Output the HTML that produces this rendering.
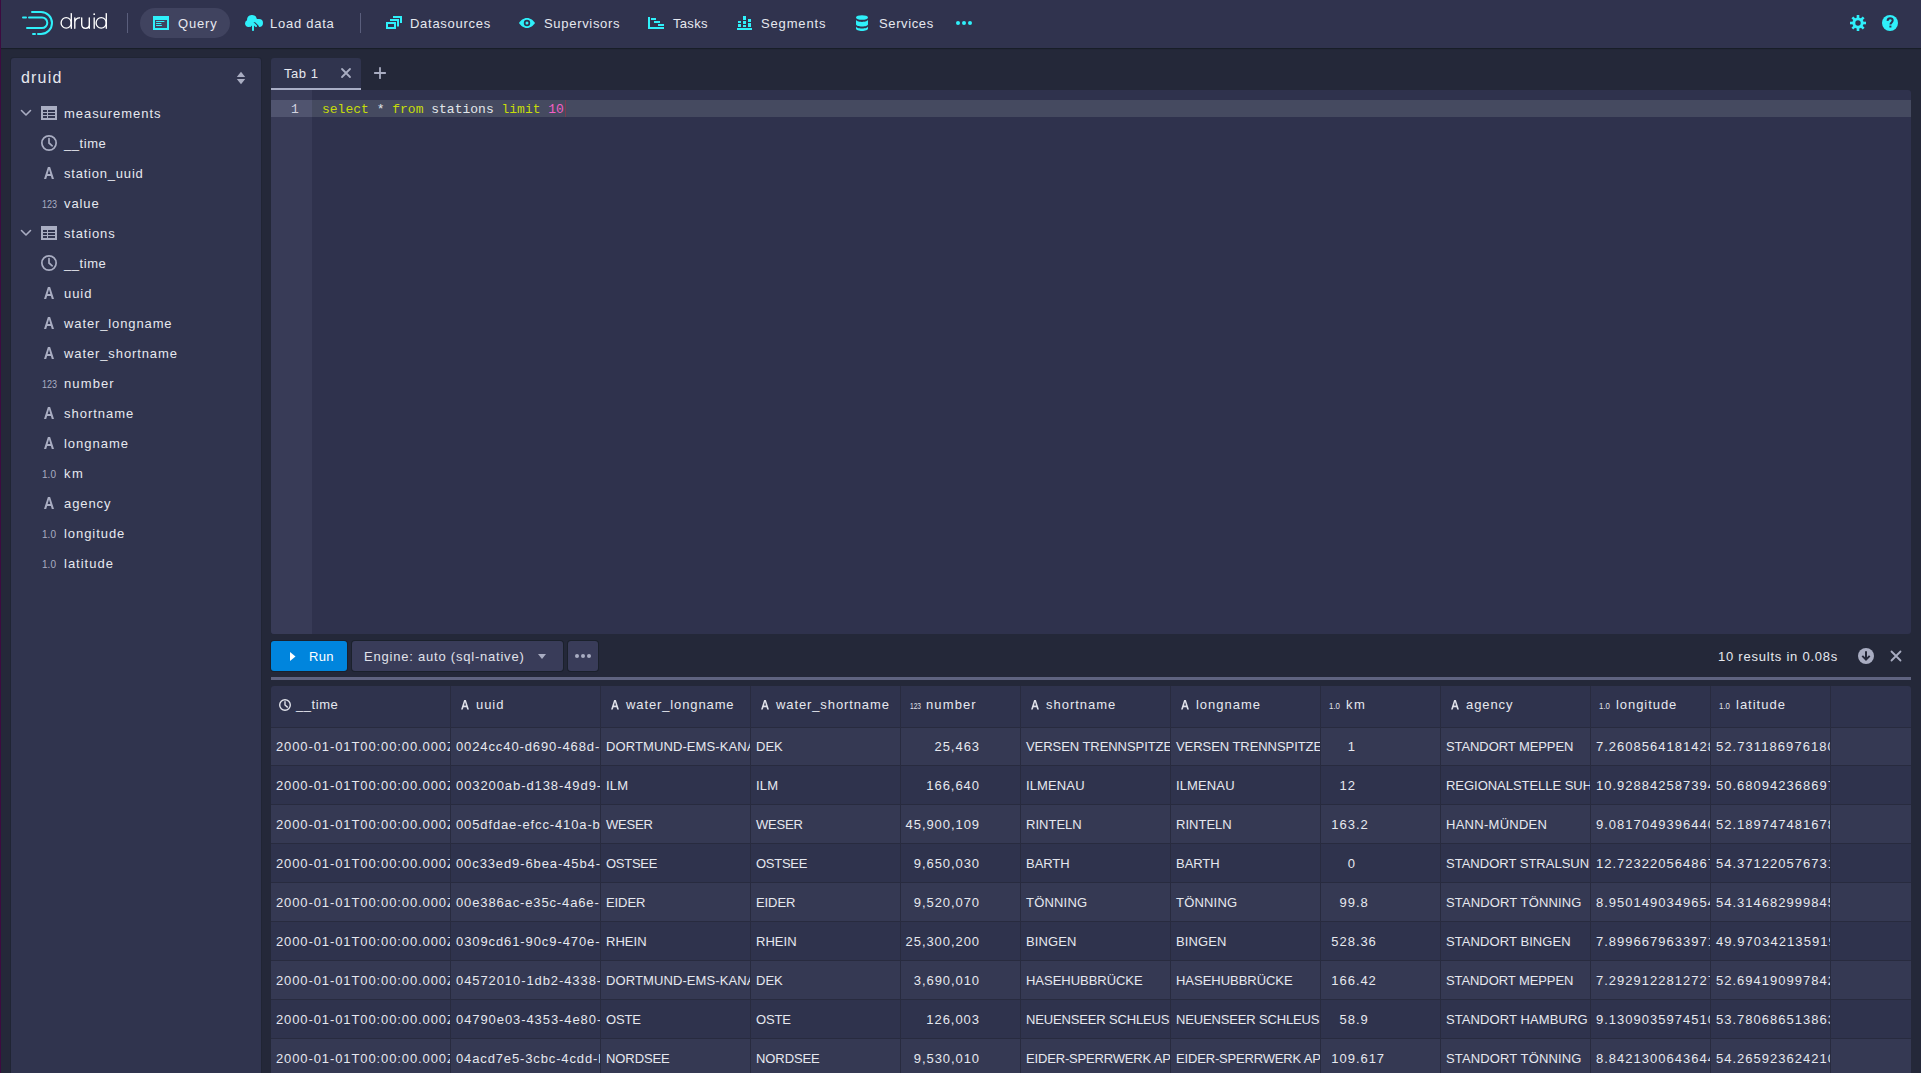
<!DOCTYPE html><html><head><meta charset="utf-8"><style>
html,body{margin:0;padding:0;}
body{width:1921px;height:1073px;overflow:hidden;position:relative;background:#242839;font-family:'Liberation Sans', sans-serif;}
.a{position:absolute;}
.t{position:absolute;white-space:pre;font-family:'Liberation Sans', sans-serif;}
svg{position:absolute;overflow:visible;}
</style></head><body><div class="a" style="left:0;top:0;width:1px;height:1073px;background:#3d0b40;z-index:5"></div><div class="a" style="left:0;top:0;width:1921px;height:48px;background:#30334e;box-shadow:0 0 0 1px rgba(16,22,26,.2),0 0 0 rgba(16,22,26,0),0 1px 1px rgba(16,22,26,.4)"></div><svg style="left:0;top:0" width="140" height="48" viewBox="0 0 140 48">
<g fill="none" stroke="#2ff0fa" stroke-width="2" stroke-linecap="round">
<path d="M32 12 H41 A11 11 0 0 1 41 34 H38"/>
<path d="M33 34 H35"/>
<path d="M23 17.5 H26"/>
<path d="M29 17.5 H42 A5.3 5.3 0 0 1 42 28.1 H27"/>
</g>
<g fill="none" stroke="#ffffff" stroke-width="1.35" stroke-linecap="round">
<ellipse cx="66.2" cy="22.9" rx="5.1" ry="5.3"/><path d="M71.3 13.6 V28.2"/>
<path d="M74.8 17.8 V28.2 M74.8 21.8 Q75.6 17.9 79.6 17.8"/>
<path d="M81.7 17.8 V24.3 Q81.7 28.3 85.5 28.3 Q89.3 28.3 89.3 24.3 M89.3 17.8 V28.2"/>
<path d="M94.2 18 V28.2"/>
<ellipse cx="101.2" cy="22.9" rx="5.1" ry="5.3"/><path d="M106.3 13.6 V28.2"/>
</g>
<circle cx="94.2" cy="14.2" r="0.9" fill="#ffffff"/>
</svg><div class="a" style="left:127px;top:13px;width:1px;height:20px;background:#5a5e7c"></div><div class="a" style="left:360px;top:13px;width:1px;height:20px;background:#5a5e7c"></div><div class="a" style="left:140px;top:8px;width:90px;height:30px;border-radius:15px;background:#40435f"></div><svg style="left:153px;top:15px" width="16" height="16" viewBox="0 0 16 16"><path fill="#2ff0fa" fill-rule="evenodd" d="M0 1h16v14H0z M2 5h12v8H2z"/><g stroke="#2ff0fa" stroke-width="1" stroke-linecap="round"><path d="M3.5 6.5h7.5M3.5 8.5h4.5M3.5 10.5h5"/></g></svg><svg style="left:245px;top:15px" width="16" height="16" viewBox="0 0 16 16"><path fill="#2ff0fa" d="M8.71 7.29C8.53 7.11 8.28 7 8 7s-.53.11-.71.29l-3 3a1.003 1.003 0 001.42 1.42L7 10.41V15c0 .55.45 1 1 1s1-.45 1-1v-4.59l1.29 1.29c.18.19.43.3.71.3a1.003 1.003 0 00.71-1.71l-3-3zM12 4c-.03 0-.07 0-.1.01A5 5 0 002 5c0 .11.01.22.02.33A3.51 3.51 0 000 8.5C0 10.43 1.57 12 3.5 12H4c0-.55.22-1.05.59-1.41l3-3a1.986 1.986 0 012.82 0l3 3c.37.36.59.86.59 1.41a4 4 0 000-8z"/></svg><svg style="left:386px;top:15px" width="16" height="16" viewBox="0 0 16 16"><g fill="none" stroke="#2ff0fa" stroke-width="2"><rect x="1" y="8" width="8" height="5"/><path d="M4 5H12V11.5"/><path d="M7 2H15V8"/></g></svg><svg style="left:519px;top:15px" width="16" height="16" viewBox="0 0 16 16"><path fill="#2ff0fa" fill-rule="evenodd" d="M8 3C4.5 3 1.6 5.6 0 8c1.6 2.4 4.5 5 8 5s6.4-2.6 8-5c-1.6-2.4-4.5-5-8-5zm0 1.8A3.2 3.2 0 1 1 8 11.2 3.2 3.2 0 0 1 8 4.8zm0 1.7A1.5 1.5 0 1 0 8 9.5 1.5 1.5 0 0 0 8 6.5z"/></svg><svg style="left:648px;top:15px" width="16" height="16" viewBox="0 0 16 16"><g fill="#2ff0fa"><rect x="0" y="2" width="2" height="12"/><rect x="0" y="12" width="16" height="2"/><rect x="3" y="3" width="5" height="2"/><rect x="6" y="6" width="6" height="2"/><rect x="10" y="9" width="6" height="2"/></g></svg><svg style="left:737px;top:15px" width="16" height="16" viewBox="0 0 16 16"><g fill="#2ff0fa"><rect x="0" y="13" width="15" height="2"/><rect x="1" y="6" width="3" height="2"/><rect x="1" y="9" width="3" height="3"/><rect x="6" y="1" width="3" height="4"/><rect x="6" y="6" width="3" height="3"/><rect x="6" y="10" width="3" height="2"/><rect x="11" y="4" width="3" height="3"/><rect x="11" y="8" width="3" height="4"/></g></svg><svg style="left:856px;top:15px" width="12" height="16" viewBox="0 0 12 16"><g fill="#2ff0fa"><ellipse cx="6" cy="2.5" rx="6" ry="2.3"/><path d="M0 4.6c0 1.3 2.7 2.4 6 2.4s6-1.1 6-2.4V9.2c0 1.3-2.7 2.3-6 2.3S0 10.5 0 9.2z"/><path d="M0 11.3c0 1.3 2.7 2.3 6 2.3s6-1 6-2.3v2.2c0 1.4-2.7 2.5-6 2.5S0 14.9 0 13.5z"/></g></svg><svg style="left:955px;top:21px" width="18" height="4" viewBox="0 0 18 4"><g fill="#2ff0fa"><circle cx="3" cy="2" r="2"/><circle cx="9" cy="2" r="2"/><circle cx="15" cy="2" r="2"/></g></svg><svg style="left:1850px;top:15px" width="16" height="16" viewBox="0 0 16 16"><g fill="#2ff0fa"><rect x="6.7" y="0" width="2.6" height="4" transform="rotate(0 8 8)"/><rect x="6.7" y="0" width="2.6" height="4" transform="rotate(45 8 8)"/><rect x="6.7" y="0" width="2.6" height="4" transform="rotate(90 8 8)"/><rect x="6.7" y="0" width="2.6" height="4" transform="rotate(135 8 8)"/><rect x="6.7" y="0" width="2.6" height="4" transform="rotate(180 8 8)"/><rect x="6.7" y="0" width="2.6" height="4" transform="rotate(225 8 8)"/><rect x="6.7" y="0" width="2.6" height="4" transform="rotate(270 8 8)"/><rect x="6.7" y="0" width="2.6" height="4" transform="rotate(315 8 8)"/><circle cx="8" cy="8" r="5.6"/></g><circle cx="8" cy="8" r="2.7" fill="#30334e"/></svg><svg style="left:1882px;top:15px" width="16" height="16" viewBox="0 0 16 16"><circle cx="8" cy="8" r="8" fill="#2ff0fa"/><path d="M5.5 5.8C5.7 4.1 6.8 3.3 8.1 3.3c1.5 0 2.6.9 2.6 2.3 0 1.8-2.1 2-2.3 3.9" fill="none" stroke="#30334e" stroke-width="2"/><rect x="7.4" y="10.6" width="2" height="1.9" fill="#30334e"/></svg><span class="t" style="left:178px;top:17.00px;font-size:13px;line-height:13px;color:#e6e8ef;letter-spacing:0.822px;font-weight:400;">Query</span><span class="t" style="left:270px;top:17.00px;font-size:13px;line-height:13px;color:#e6e8ef;letter-spacing:0.752px;font-weight:400;">Load data</span><span class="t" style="left:410px;top:17.00px;font-size:13px;line-height:13px;color:#e6e8ef;letter-spacing:0.727px;font-weight:400;">Datasources</span><span class="t" style="left:544px;top:17.00px;font-size:13px;line-height:13px;color:#e6e8ef;letter-spacing:0.692px;font-weight:400;">Supervisors</span><span class="t" style="left:673px;top:17.00px;font-size:13px;line-height:13px;color:#e6e8ef;letter-spacing:0.322px;font-weight:400;">Tasks</span><span class="t" style="left:761px;top:17.00px;font-size:13px;line-height:13px;color:#e6e8ef;letter-spacing:0.842px;font-weight:400;">Segments</span><span class="t" style="left:879px;top:17.00px;font-size:13px;line-height:13px;color:#e6e8ef;letter-spacing:0.621px;font-weight:400;">Services</span><div class="a" style="left:11px;top:58px;width:250px;height:1030px;background:#30344e;border-radius:3px;box-shadow:0 0 0 1px rgba(16,22,26,.15)"></div><span class="t" style="left:21px;top:70.46px;font-size:16px;line-height:16px;color:#e6e8ef;letter-spacing:1.181px;font-weight:400;">druid</span><svg style="left:236px;top:71px" width="10" height="14" viewBox="0 0 10 14"><g fill="#a9adc2"><path d="M0.8 6L5 0.8L9.2 6z"/><path d="M0.8 8L5 13.2L9.2 8z"/></g></svg><svg style="left:20px;top:105px" width="12" height="16" viewBox="0 0 12 16"><path d="M1.5 5.5L6 10L10.5 5.5" fill="none" stroke="#a9adc2" stroke-width="1.6" stroke-linecap="round" stroke-linejoin="round"/></svg><svg style="left:41px;top:106px" width="16" height="14" viewBox="0 0 16 14"><path fill="#a9adc2" fill-rule="evenodd" d="M0 0h16v14H0z M2 4h4v2H2z M7 4h7v2H7z M2 7h4v2H2z M7 7h7v2H7z M2 10h4v2H2z M7 10h7v2H7z"/></svg><span class="t" style="left:64px;top:107.00px;font-size:13px;line-height:13px;color:#e6e8ef;letter-spacing:0.957px;font-weight:400;">measurements</span><svg style="left:41px;top:135.0px" width="16" height="16" viewBox="0 0 16 16"><circle cx="8.0" cy="8.0" r="7.15" fill="none" stroke="#a9adc2" stroke-width="1.7"/><path d="M8.0 3.6V8.0L11.2 10.8" fill="none" stroke="#a9adc2" stroke-width="1.7" stroke-linecap="round"/></svg><span class="t" style="left:64px;top:137.00px;font-size:13px;line-height:13px;color:#e6e8ef;letter-spacing:0.557px;font-weight:400;">__time</span><svg style="left:44px;top:167.0px" width="10" height="12" viewBox="0 0 10 12"><path fill="#a9adc2" fill-rule="evenodd" d="M3.9 0h2.2L10 12H7.8L6.9 9H3.1L2.2 12H0z M5 2.6L3.7 7.1h2.6z"/></svg><span class="t" style="left:64px;top:167.00px;font-size:13px;line-height:13px;color:#e6e8ef;letter-spacing:0.789px;font-weight:400;">station_uuid</span><svg style="left:42px;top:199.5px" width="15" height="8" viewBox="0 0 15 8"><text x="0" y="8" font-family="Liberation Sans" font-size="10.5" fill="#a9adc2" textLength="15" lengthAdjust="spacingAndGlyphs">123</text></svg><span class="t" style="left:64px;top:197.00px;font-size:13px;line-height:13px;color:#e6e8ef;letter-spacing:0.887px;font-weight:400;">value</span><svg style="left:20px;top:225px" width="12" height="16" viewBox="0 0 12 16"><path d="M1.5 5.5L6 10L10.5 5.5" fill="none" stroke="#a9adc2" stroke-width="1.6" stroke-linecap="round" stroke-linejoin="round"/></svg><svg style="left:41px;top:226px" width="16" height="14" viewBox="0 0 16 14"><path fill="#a9adc2" fill-rule="evenodd" d="M0 0h16v14H0z M2 4h4v2H2z M7 4h7v2H7z M2 7h4v2H2z M7 7h7v2H7z M2 10h4v2H2z M7 10h7v2H7z"/></svg><span class="t" style="left:64px;top:227.00px;font-size:13px;line-height:13px;color:#e6e8ef;letter-spacing:0.838px;font-weight:400;">stations</span><svg style="left:41px;top:255.0px" width="16" height="16" viewBox="0 0 16 16"><circle cx="8.0" cy="8.0" r="7.15" fill="none" stroke="#a9adc2" stroke-width="1.7"/><path d="M8.0 3.6V8.0L11.2 10.8" fill="none" stroke="#a9adc2" stroke-width="1.7" stroke-linecap="round"/></svg><span class="t" style="left:64px;top:257.00px;font-size:13px;line-height:13px;color:#e6e8ef;letter-spacing:0.557px;font-weight:400;">__time</span><svg style="left:44px;top:287.0px" width="10" height="12" viewBox="0 0 10 12"><path fill="#a9adc2" fill-rule="evenodd" d="M3.9 0h2.2L10 12H7.8L6.9 9H3.1L2.2 12H0z M5 2.6L3.7 7.1h2.6z"/></svg><span class="t" style="left:64px;top:287.00px;font-size:13px;line-height:13px;color:#e6e8ef;letter-spacing:0.941px;font-weight:400;">uuid</span><svg style="left:44px;top:317.0px" width="10" height="12" viewBox="0 0 10 12"><path fill="#a9adc2" fill-rule="evenodd" d="M3.9 0h2.2L10 12H7.8L6.9 9H3.1L2.2 12H0z M5 2.6L3.7 7.1h2.6z"/></svg><span class="t" style="left:64px;top:317.00px;font-size:13px;line-height:13px;color:#e6e8ef;letter-spacing:0.882px;font-weight:400;">water_longname</span><svg style="left:44px;top:347.0px" width="10" height="12" viewBox="0 0 10 12"><path fill="#a9adc2" fill-rule="evenodd" d="M3.9 0h2.2L10 12H7.8L6.9 9H3.1L2.2 12H0z M5 2.6L3.7 7.1h2.6z"/></svg><span class="t" style="left:64px;top:347.00px;font-size:13px;line-height:13px;color:#e6e8ef;letter-spacing:0.892px;font-weight:400;">water_shortname</span><svg style="left:42px;top:379.5px" width="15" height="8" viewBox="0 0 15 8"><text x="0" y="8" font-family="Liberation Sans" font-size="10.5" fill="#a9adc2" textLength="15" lengthAdjust="spacingAndGlyphs">123</text></svg><span class="t" style="left:64px;top:377.00px;font-size:13px;line-height:13px;color:#e6e8ef;letter-spacing:1.112px;font-weight:400;">number</span><svg style="left:44px;top:407.0px" width="10" height="12" viewBox="0 0 10 12"><path fill="#a9adc2" fill-rule="evenodd" d="M3.9 0h2.2L10 12H7.8L6.9 9H3.1L2.2 12H0z M5 2.6L3.7 7.1h2.6z"/></svg><span class="t" style="left:64px;top:407.00px;font-size:13px;line-height:13px;color:#e6e8ef;letter-spacing:0.984px;font-weight:400;">shortname</span><svg style="left:44px;top:437.0px" width="10" height="12" viewBox="0 0 10 12"><path fill="#a9adc2" fill-rule="evenodd" d="M3.9 0h2.2L10 12H7.8L6.9 9H3.1L2.2 12H0z M5 2.6L3.7 7.1h2.6z"/></svg><span class="t" style="left:64px;top:437.00px;font-size:13px;line-height:13px;color:#e6e8ef;letter-spacing:0.979px;font-weight:400;">longname</span><svg style="left:42px;top:469.5px" width="14" height="8" viewBox="0 0 14 8"><text x="0" y="8" font-family="Liberation Sans" font-size="10.5" fill="#a9adc2" textLength="14" lengthAdjust="spacingAndGlyphs">1.0</text></svg><span class="t" style="left:64px;top:467.00px;font-size:13px;line-height:13px;color:#e6e8ef;letter-spacing:1.430px;font-weight:400;">km</span><svg style="left:44px;top:497.0px" width="10" height="12" viewBox="0 0 10 12"><path fill="#a9adc2" fill-rule="evenodd" d="M3.9 0h2.2L10 12H7.8L6.9 9H3.1L2.2 12H0z M5 2.6L3.7 7.1h2.6z"/></svg><span class="t" style="left:64px;top:497.00px;font-size:13px;line-height:13px;color:#e6e8ef;letter-spacing:0.896px;font-weight:400;">agency</span><svg style="left:42px;top:529.5px" width="14" height="8" viewBox="0 0 14 8"><text x="0" y="8" font-family="Liberation Sans" font-size="10.5" fill="#a9adc2" textLength="14" lengthAdjust="spacingAndGlyphs">1.0</text></svg><span class="t" style="left:64px;top:527.00px;font-size:13px;line-height:13px;color:#e6e8ef;letter-spacing:0.943px;font-weight:400;">longitude</span><svg style="left:42px;top:559.5px" width="14" height="8" viewBox="0 0 14 8"><text x="0" y="8" font-family="Liberation Sans" font-size="10.5" fill="#a9adc2" textLength="14" lengthAdjust="spacingAndGlyphs">1.0</text></svg><span class="t" style="left:64px;top:557.00px;font-size:13px;line-height:13px;color:#e6e8ef;letter-spacing:0.994px;font-weight:400;">latitude</span><div class="a" style="left:271px;top:58px;width:90px;height:30px;background:#30344e;border-radius:3px 3px 0 0"></div><div class="a" style="left:271px;top:88px;width:90px;height:2px;background:#a9aec6"></div><span class="t" style="left:284px;top:67.00px;font-size:13px;line-height:13px;color:#e6e8ef;letter-spacing:0.522px;font-weight:400;">Tab 1</span><svg style="left:340px;top:67px" width="12" height="12" viewBox="0 0 12 12"><path d="M2 2L10 10M10 2L2 10" stroke="#a9adc2" stroke-width="1.8" stroke-linecap="round"/></svg><svg style="left:374px;top:67px" width="12" height="12" viewBox="0 0 12 12"><path d="M6 0.8V11.2M0.8 6H11.2" stroke="#a9adc2" stroke-width="1.8" stroke-linecap="round"/></svg><div class="a" style="left:271px;top:90px;width:1640px;height:544px;background:#2f324d;border-radius:0 3px 3px 3px;overflow:hidden"><div class="a" style="left:0;top:0;width:41px;height:544px;background:#383b57"></div><div class="a" style="left:0;top:10px;width:41px;height:17px;background:#50546f"></div><div class="a" style="left:41px;top:10px;width:1599px;height:17px;background:#454a60"></div></div><div class="t" style="left:322px;top:103.00px;font-family:'Liberation Mono', monospace;font-size:13px;line-height:13px"><span style="color:#c6dd0a">select</span><span style="color:#e1e6ea"> </span><span style="color:#e1e6ea">*</span><span style="color:#e1e6ea"> </span><span style="color:#c6dd0a">from</span><span style="color:#e1e6ea"> stations </span><span style="color:#c6dd0a">limit</span><span style="color:#e1e6ea"> </span><span style="color:#f25fc4">10</span></div><div class="t" style="left:291px;top:103.00px;font-family:'Liberation Mono', monospace;font-size:13px;line-height:13px;color:#d0d2df">1</div><div class="a" style="left:565px;top:100px;width:1px;height:17px;background:#7a3b4e"></div><div class="a" style="left:271px;top:641px;width:76px;height:30px;background:#0085dd;border-radius:3px;box-shadow:0 0 0 1px rgba(16,22,26,.4)"></div><svg style="left:290px;top:652px" width="6" height="9" viewBox="0 0 6 9"><path d="M0 0L5.5 4.5L0 9z" fill="#ffffff"/></svg><span class="t" style="left:309px;top:650.00px;font-size:13px;line-height:13px;color:#ffffff;letter-spacing:0.359px;font-weight:400;">Run</span><div class="a" style="left:352px;top:641px;width:211px;height:30px;background:#393c59;border-radius:3px;box-shadow:0 0 0 1px rgba(16,22,26,.4)"></div><span class="t" style="left:364px;top:650.00px;font-size:13px;line-height:13px;color:#e0e2ea;letter-spacing:0.785px;font-weight:400;">Engine: auto (sql-native)</span><svg style="left:538px;top:654px" width="8" height="5" viewBox="0 0 8 5"><path d="M0 0H8L4 5z" fill="#a9adc2"/></svg><div class="a" style="left:568px;top:641px;width:30px;height:30px;background:#393c59;border-radius:3px;box-shadow:0 0 0 1px rgba(16,22,26,.4)"></div><svg style="left:575px;top:654px" width="16" height="4" viewBox="0 0 16 4"><g fill="#a9adc2"><circle cx="2" cy="2" r="2"/><circle cx="8" cy="2" r="2"/><circle cx="14" cy="2" r="2"/></g></svg><span class="t" style="left:1718px;top:650.00px;font-size:13px;line-height:13px;color:#e6e8ef;letter-spacing:0.766px;font-weight:400;">10 results in 0.08s</span><svg style="left:1858px;top:648px" width="16" height="16" viewBox="0 0 16 16"><circle cx="8" cy="8" r="8" fill="#a9adc2"/><path d="M8 3.2V11.5M4.3 7.9L8 11.6L11.7 7.9" fill="none" stroke="#242839" stroke-width="2"/></svg><svg style="left:1890px;top:650px" width="12" height="12" viewBox="0 0 12 12"><path d="M1.5 1.5L10.5 10.5M10.5 1.5L1.5 10.5" stroke="#a9adc2" stroke-width="1.8" stroke-linecap="round"/></svg><div class="a" style="left:271px;top:677px;width:1640px;height:3px;background:#5f6380"></div><div class="a" style="left:271px;top:686px;width:1640px;height:397px;background:#2f334d;border-radius:3px;overflow:hidden"><div class="a" style="left:0;top:41px;width:1640px;height:1px;background:#282b3f"></div><div class="a" style="left:0;top:42px;width:1640px;height:37px;background:#353953"></div><div class="a" style="left:0;top:79px;width:1640px;height:1px;background:#282b3f"></div><div class="a" style="left:0;top:80px;width:1640px;height:38px;background:#2f334d"></div><div class="a" style="left:0;top:118px;width:1640px;height:1px;background:#282b3f"></div><div class="a" style="left:0;top:119px;width:1640px;height:38px;background:#353953"></div><div class="a" style="left:0;top:157px;width:1640px;height:1px;background:#282b3f"></div><div class="a" style="left:0;top:158px;width:1640px;height:38px;background:#2f334d"></div><div class="a" style="left:0;top:196px;width:1640px;height:1px;background:#282b3f"></div><div class="a" style="left:0;top:197px;width:1640px;height:38px;background:#353953"></div><div class="a" style="left:0;top:235px;width:1640px;height:1px;background:#282b3f"></div><div class="a" style="left:0;top:236px;width:1640px;height:38px;background:#2f334d"></div><div class="a" style="left:0;top:274px;width:1640px;height:1px;background:#282b3f"></div><div class="a" style="left:0;top:275px;width:1640px;height:38px;background:#353953"></div><div class="a" style="left:0;top:313px;width:1640px;height:1px;background:#282b3f"></div><div class="a" style="left:0;top:314px;width:1640px;height:38px;background:#2f334d"></div><div class="a" style="left:0;top:352px;width:1640px;height:1px;background:#282b3f"></div><div class="a" style="left:0;top:353px;width:1640px;height:38px;background:#353953"></div><div class="a" style="left:0;top:391px;width:1640px;height:1px;background:#282b3f"></div><div class="a" style="left:179px;top:0;width:1px;height:400px;background:#282b3f"></div><div class="a" style="left:329px;top:0;width:1px;height:400px;background:#282b3f"></div><div class="a" style="left:479px;top:0;width:1px;height:400px;background:#282b3f"></div><div class="a" style="left:629px;top:0;width:1px;height:400px;background:#282b3f"></div><div class="a" style="left:749px;top:0;width:1px;height:400px;background:#282b3f"></div><div class="a" style="left:899px;top:0;width:1px;height:400px;background:#282b3f"></div><div class="a" style="left:1049px;top:0;width:1px;height:400px;background:#282b3f"></div><div class="a" style="left:1169px;top:0;width:1px;height:400px;background:#282b3f"></div><div class="a" style="left:1319px;top:0;width:1px;height:400px;background:#282b3f"></div><div class="a" style="left:1439px;top:0;width:1px;height:400px;background:#282b3f"></div><div class="a" style="left:1559px;top:0;width:1px;height:400px;background:#282b3f"></div></div><svg style="left:279px;top:699.0px" width="12" height="12" viewBox="0 0 12 12"><circle cx="6.0" cy="6.0" r="5.3" fill="none" stroke="#e0e2ea" stroke-width="1.4"/><path d="M6.0 2.7V6.0L8.399999999999999 8.100000000000001" fill="none" stroke="#e0e2ea" stroke-width="1.4" stroke-linecap="round"/></svg><span class="t" style="left:296px;top:698.00px;font-size:13px;line-height:13px;color:#e6e8ef;letter-spacing:0.557px;font-weight:400;">__time</span><svg style="left:461px;top:699.75px" width="8" height="9.5" viewBox="0 0 10 12"><path fill="#e0e2ea" fill-rule="evenodd" d="M3.9 0h2.2L10 12H7.8L6.9 9H3.1L2.2 12H0z M5 2.6L3.7 7.1h2.6z"/></svg><span class="t" style="left:476px;top:698.00px;font-size:13px;line-height:13px;color:#e6e8ef;letter-spacing:0.941px;font-weight:400;">uuid</span><svg style="left:611px;top:699.75px" width="8" height="9.5" viewBox="0 0 10 12"><path fill="#e0e2ea" fill-rule="evenodd" d="M3.9 0h2.2L10 12H7.8L6.9 9H3.1L2.2 12H0z M5 2.6L3.7 7.1h2.6z"/></svg><span class="t" style="left:626px;top:698.00px;font-size:13px;line-height:13px;color:#e6e8ef;letter-spacing:0.882px;font-weight:400;">water_longname</span><svg style="left:761px;top:699.75px" width="8" height="9.5" viewBox="0 0 10 12"><path fill="#e0e2ea" fill-rule="evenodd" d="M3.9 0h2.2L10 12H7.8L6.9 9H3.1L2.2 12H0z M5 2.6L3.7 7.1h2.6z"/></svg><span class="t" style="left:776px;top:698.00px;font-size:13px;line-height:13px;color:#e6e8ef;letter-spacing:0.892px;font-weight:400;">water_shortname</span><svg style="left:910px;top:701.75px" width="11" height="6.5" viewBox="0 0 11 6.5"><text x="0" y="6.5" font-family="Liberation Sans" font-size="8.5" fill="#e0e2ea" textLength="11" lengthAdjust="spacingAndGlyphs">123</text></svg><span class="t" style="left:926px;top:698.00px;font-size:13px;line-height:13px;color:#e6e8ef;letter-spacing:1.112px;font-weight:400;">number</span><svg style="left:1031px;top:699.75px" width="8" height="9.5" viewBox="0 0 10 12"><path fill="#e0e2ea" fill-rule="evenodd" d="M3.9 0h2.2L10 12H7.8L6.9 9H3.1L2.2 12H0z M5 2.6L3.7 7.1h2.6z"/></svg><span class="t" style="left:1046px;top:698.00px;font-size:13px;line-height:13px;color:#e6e8ef;letter-spacing:0.984px;font-weight:400;">shortname</span><svg style="left:1181px;top:699.75px" width="8" height="9.5" viewBox="0 0 10 12"><path fill="#e0e2ea" fill-rule="evenodd" d="M3.9 0h2.2L10 12H7.8L6.9 9H3.1L2.2 12H0z M5 2.6L3.7 7.1h2.6z"/></svg><span class="t" style="left:1196px;top:698.00px;font-size:13px;line-height:13px;color:#e6e8ef;letter-spacing:0.979px;font-weight:400;">longname</span><svg style="left:1329px;top:701.75px" width="11" height="6.5" viewBox="0 0 11 6.5"><text x="0" y="6.5" font-family="Liberation Sans" font-size="8.5" fill="#e0e2ea" textLength="11" lengthAdjust="spacingAndGlyphs">1.0</text></svg><span class="t" style="left:1346px;top:698.00px;font-size:13px;line-height:13px;color:#e6e8ef;letter-spacing:1.430px;font-weight:400;">km</span><svg style="left:1451px;top:699.75px" width="8" height="9.5" viewBox="0 0 10 12"><path fill="#e0e2ea" fill-rule="evenodd" d="M3.9 0h2.2L10 12H7.8L6.9 9H3.1L2.2 12H0z M5 2.6L3.7 7.1h2.6z"/></svg><span class="t" style="left:1466px;top:698.00px;font-size:13px;line-height:13px;color:#e6e8ef;letter-spacing:0.896px;font-weight:400;">agency</span><svg style="left:1599px;top:701.75px" width="11" height="6.5" viewBox="0 0 11 6.5"><text x="0" y="6.5" font-family="Liberation Sans" font-size="8.5" fill="#e0e2ea" textLength="11" lengthAdjust="spacingAndGlyphs">1.0</text></svg><span class="t" style="left:1616px;top:698.00px;font-size:13px;line-height:13px;color:#e6e8ef;letter-spacing:0.943px;font-weight:400;">longitude</span><svg style="left:1719px;top:701.75px" width="11" height="6.5" viewBox="0 0 11 6.5"><text x="0" y="6.5" font-family="Liberation Sans" font-size="8.5" fill="#e0e2ea" textLength="11" lengthAdjust="spacingAndGlyphs">1.0</text></svg><span class="t" style="left:1736px;top:698.00px;font-size:13px;line-height:13px;color:#e6e8ef;letter-spacing:0.994px;font-weight:400;">latitude</span><div class="a" style="left:271px;top:728px;width:179px;height:38px;overflow:hidden"><span class="t" style="left:5px;top:12.00px;font-size:13px;line-height:13px;color:#e6e8ef;letter-spacing:0.893px;font-weight:400;">2000-01-01T00:00:00.000Z</span></div><div class="a" style="left:450px;top:728px;width:150px;height:38px;overflow:hidden"><span class="t" style="left:6px;top:12.00px;font-size:13px;line-height:13px;color:#e6e8ef;letter-spacing:0.891px;font-weight:400;">0024cc40-d690-468d-9a3f-1b2c3d4e5f60</span></div><div class="a" style="left:600px;top:728px;width:150px;height:38px;overflow:hidden"><span class="t" style="left:6px;top:12.00px;font-size:13px;line-height:13px;color:#e6e8ef;letter-spacing:0.100px;font-weight:400;">DORTMUND-EMS-KANAL</span></div><div class="a" style="left:750px;top:728px;width:150px;height:38px;overflow:hidden"><span class="t" style="left:6px;top:12.00px;font-size:13px;line-height:13px;color:#e6e8ef;letter-spacing:0.005px;font-weight:400;">DEK</span></div><div class="a" style="left:900px;top:728px;width:120px;height:38px;overflow:hidden"><span class="t" style="left:34.5px;top:12.00px;font-size:13px;line-height:13px;color:#e6e8ef;letter-spacing:0.956px;font-weight:400;">25,463</span></div><div class="a" style="left:1020px;top:728px;width:150px;height:38px;overflow:hidden"><span class="t" style="left:6px;top:12.00px;font-size:13px;line-height:13px;color:#e6e8ef;letter-spacing:-0.057px;font-weight:400;">VERSEN TRENNSPITZE</span></div><div class="a" style="left:1170px;top:728px;width:150px;height:38px;overflow:hidden"><span class="t" style="left:6px;top:12.00px;font-size:13px;line-height:13px;color:#e6e8ef;letter-spacing:-0.057px;font-weight:400;">VERSEN TRENNSPITZE</span></div><div class="a" style="left:1320px;top:728px;width:120px;height:38px;overflow:hidden"><span class="t" style="left:27.71875px;top:12.00px;font-size:13px;line-height:13px;color:#e6e8ef;letter-spacing:1.047px;font-weight:400;">1</span></div><div class="a" style="left:1440px;top:728px;width:150px;height:38px;overflow:hidden"><span class="t" style="left:6px;top:12.00px;font-size:13px;line-height:13px;color:#e6e8ef;letter-spacing:-0.087px;font-weight:400;">STANDORT MEPPEN</span></div><div class="a" style="left:1590px;top:728px;width:120px;height:38px;overflow:hidden"><span class="t" style="left:6px;top:12.00px;font-size:13px;line-height:13px;color:#e6e8ef;letter-spacing:1.010px;font-weight:400;">7.260856418142867</span></div><div class="a" style="left:1710px;top:728px;width:120px;height:38px;overflow:hidden"><span class="t" style="left:6px;top:12.00px;font-size:13px;line-height:13px;color:#e6e8ef;letter-spacing:1.067px;font-weight:400;">52.73118697618097</span></div><div class="a" style="left:271px;top:766px;width:179px;height:38px;overflow:hidden"><span class="t" style="left:5px;top:13.00px;font-size:13px;line-height:13px;color:#e6e8ef;letter-spacing:0.893px;font-weight:400;">2000-01-01T00:00:00.000Z</span></div><div class="a" style="left:450px;top:766px;width:150px;height:38px;overflow:hidden"><span class="t" style="left:6px;top:13.00px;font-size:13px;line-height:13px;color:#e6e8ef;letter-spacing:0.914px;font-weight:400;">003200ab-d138-49d9-8c1d-2e3f4a5b6c70</span></div><div class="a" style="left:600px;top:766px;width:150px;height:38px;overflow:hidden"><span class="t" style="left:6px;top:13.00px;font-size:13px;line-height:13px;color:#e6e8ef;letter-spacing:0.208px;font-weight:400;">ILM</span></div><div class="a" style="left:750px;top:766px;width:150px;height:38px;overflow:hidden"><span class="t" style="left:6px;top:13.00px;font-size:13px;line-height:13px;color:#e6e8ef;letter-spacing:0.208px;font-weight:400;">ILM</span></div><div class="a" style="left:900px;top:766px;width:120px;height:38px;overflow:hidden"><span class="t" style="left:26.234375px;top:13.00px;font-size:13px;line-height:13px;color:#e6e8ef;letter-spacing:0.967px;font-weight:400;">166,640</span></div><div class="a" style="left:1020px;top:766px;width:150px;height:38px;overflow:hidden"><span class="t" style="left:6px;top:13.00px;font-size:13px;line-height:13px;color:#e6e8ef;letter-spacing:0.121px;font-weight:400;">ILMENAU</span></div><div class="a" style="left:1170px;top:766px;width:150px;height:38px;overflow:hidden"><span class="t" style="left:6px;top:13.00px;font-size:13px;line-height:13px;color:#e6e8ef;letter-spacing:0.121px;font-weight:400;">ILMENAU</span></div><div class="a" style="left:1320px;top:766px;width:120px;height:38px;overflow:hidden"><span class="t" style="left:19.453125px;top:13.00px;font-size:13px;line-height:13px;color:#e6e8ef;letter-spacing:1.039px;font-weight:400;">12</span></div><div class="a" style="left:1440px;top:766px;width:150px;height:38px;overflow:hidden"><span class="t" style="left:6px;top:13.00px;font-size:13px;line-height:13px;color:#e6e8ef;letter-spacing:-0.032px;font-weight:400;">REGIONALSTELLE SUHL</span></div><div class="a" style="left:1590px;top:766px;width:120px;height:38px;overflow:hidden"><span class="t" style="left:6px;top:13.00px;font-size:13px;line-height:13px;color:#e6e8ef;letter-spacing:1.006px;font-weight:400;">10.928842587394</span></div><div class="a" style="left:1710px;top:766px;width:120px;height:38px;overflow:hidden"><span class="t" style="left:6px;top:13.00px;font-size:13px;line-height:13px;color:#e6e8ef;letter-spacing:1.006px;font-weight:400;">50.680942368697</span></div><div class="a" style="left:271px;top:805px;width:179px;height:38px;overflow:hidden"><span class="t" style="left:5px;top:13.00px;font-size:13px;line-height:13px;color:#e6e8ef;letter-spacing:0.893px;font-weight:400;">2000-01-01T00:00:00.000Z</span></div><div class="a" style="left:450px;top:805px;width:150px;height:38px;overflow:hidden"><span class="t" style="left:6px;top:13.00px;font-size:13px;line-height:13px;color:#e6e8ef;letter-spacing:0.875px;font-weight:400;">005dfdae-efcc-410a-b7e2-3f4a5b6c7d80</span></div><div class="a" style="left:600px;top:805px;width:150px;height:38px;overflow:hidden"><span class="t" style="left:6px;top:13.00px;font-size:13px;line-height:13px;color:#e6e8ef;letter-spacing:-0.219px;font-weight:400;">WESER</span></div><div class="a" style="left:750px;top:805px;width:150px;height:38px;overflow:hidden"><span class="t" style="left:6px;top:13.00px;font-size:13px;line-height:13px;color:#e6e8ef;letter-spacing:-0.219px;font-weight:400;">WESER</span></div><div class="a" style="left:900px;top:805px;width:120px;height:38px;overflow:hidden"><span class="t" style="left:5.5625px;top:13.00px;font-size:13px;line-height:13px;color:#e6e8ef;letter-spacing:0.936px;font-weight:400;">45,900,109</span></div><div class="a" style="left:1020px;top:805px;width:150px;height:38px;overflow:hidden"><span class="t" style="left:6px;top:13.00px;font-size:13px;line-height:13px;color:#e6e8ef;letter-spacing:0.013px;font-weight:400;">RINTELN</span></div><div class="a" style="left:1170px;top:805px;width:150px;height:38px;overflow:hidden"><span class="t" style="left:6px;top:13.00px;font-size:13px;line-height:13px;color:#e6e8ef;letter-spacing:0.013px;font-weight:400;">RINTELN</span></div><div class="a" style="left:1320px;top:805px;width:120px;height:38px;overflow:hidden"><span class="t" style="left:11.171875px;top:13.00px;font-size:13px;line-height:13px;color:#e6e8ef;letter-spacing:1.042px;font-weight:400;">163</span><span class="t" style="left:36px;top:13.00px;font-size:13px;line-height:13px;color:#e6e8ef;letter-spacing:0.781px;font-weight:400;">.2</span></div><div class="a" style="left:1440px;top:805px;width:150px;height:38px;overflow:hidden"><span class="t" style="left:6px;top:13.00px;font-size:13px;line-height:13px;color:#e6e8ef;letter-spacing:0.273px;font-weight:400;">HANN-MÜNDEN</span></div><div class="a" style="left:1590px;top:805px;width:120px;height:38px;overflow:hidden"><span class="t" style="left:6px;top:13.00px;font-size:13px;line-height:13px;color:#e6e8ef;letter-spacing:1.010px;font-weight:400;">9.081704939644067</span></div><div class="a" style="left:1710px;top:805px;width:120px;height:38px;overflow:hidden"><span class="t" style="left:6px;top:13.00px;font-size:13px;line-height:13px;color:#e6e8ef;letter-spacing:1.010px;font-weight:400;">52.18974748167889</span></div><div class="a" style="left:271px;top:844px;width:179px;height:38px;overflow:hidden"><span class="t" style="left:5px;top:13.00px;font-size:13px;line-height:13px;color:#e6e8ef;letter-spacing:0.893px;font-weight:400;">2000-01-01T00:00:00.000Z</span></div><div class="a" style="left:450px;top:844px;width:150px;height:38px;overflow:hidden"><span class="t" style="left:6px;top:13.00px;font-size:13px;line-height:13px;color:#e6e8ef;letter-spacing:0.891px;font-weight:400;">00c33ed9-6bea-45b4-a6f3-4a5b6c7d8e90</span></div><div class="a" style="left:600px;top:844px;width:150px;height:38px;overflow:hidden"><span class="t" style="left:6px;top:13.00px;font-size:13px;line-height:13px;color:#e6e8ef;letter-spacing:-0.273px;font-weight:400;">OSTSEE</span></div><div class="a" style="left:750px;top:844px;width:150px;height:38px;overflow:hidden"><span class="t" style="left:6px;top:13.00px;font-size:13px;line-height:13px;color:#e6e8ef;letter-spacing:-0.273px;font-weight:400;">OSTSEE</span></div><div class="a" style="left:900px;top:844px;width:120px;height:38px;overflow:hidden"><span class="t" style="left:13.828125px;top:13.00px;font-size:13px;line-height:13px;color:#e6e8ef;letter-spacing:0.925px;font-weight:400;">9,650,030</span></div><div class="a" style="left:1020px;top:844px;width:150px;height:38px;overflow:hidden"><span class="t" style="left:6px;top:13.00px;font-size:13px;line-height:13px;color:#e6e8ef;letter-spacing:-0.041px;font-weight:400;">BARTH</span></div><div class="a" style="left:1170px;top:844px;width:150px;height:38px;overflow:hidden"><span class="t" style="left:6px;top:13.00px;font-size:13px;line-height:13px;color:#e6e8ef;letter-spacing:-0.041px;font-weight:400;">BARTH</span></div><div class="a" style="left:1320px;top:844px;width:120px;height:38px;overflow:hidden"><span class="t" style="left:27.71875px;top:13.00px;font-size:13px;line-height:13px;color:#e6e8ef;letter-spacing:1.047px;font-weight:400;">0</span></div><div class="a" style="left:1440px;top:844px;width:150px;height:38px;overflow:hidden"><span class="t" style="left:6px;top:13.00px;font-size:13px;line-height:13px;color:#e6e8ef;letter-spacing:0.007px;font-weight:400;">STANDORT STRALSUND</span></div><div class="a" style="left:1590px;top:844px;width:120px;height:38px;overflow:hidden"><span class="t" style="left:6px;top:13.00px;font-size:13px;line-height:13px;color:#e6e8ef;letter-spacing:1.006px;font-weight:400;">12.723220564867</span></div><div class="a" style="left:1710px;top:844px;width:120px;height:38px;overflow:hidden"><span class="t" style="left:6px;top:13.00px;font-size:13px;line-height:13px;color:#e6e8ef;letter-spacing:1.006px;font-weight:400;">54.371220576731</span></div><div class="a" style="left:271px;top:883px;width:179px;height:38px;overflow:hidden"><span class="t" style="left:5px;top:13.00px;font-size:13px;line-height:13px;color:#e6e8ef;letter-spacing:0.893px;font-weight:400;">2000-01-01T00:00:00.000Z</span></div><div class="a" style="left:450px;top:883px;width:150px;height:38px;overflow:hidden"><span class="t" style="left:6px;top:13.00px;font-size:13px;line-height:13px;color:#e6e8ef;letter-spacing:0.865px;font-weight:400;">00e386ac-e35c-4a6e-95a4-5b6c7d8e9fa0</span></div><div class="a" style="left:600px;top:883px;width:150px;height:38px;overflow:hidden"><span class="t" style="left:6px;top:13.00px;font-size:13px;line-height:13px;color:#e6e8ef;letter-spacing:-0.084px;font-weight:400;">EIDER</span></div><div class="a" style="left:750px;top:883px;width:150px;height:38px;overflow:hidden"><span class="t" style="left:6px;top:13.00px;font-size:13px;line-height:13px;color:#e6e8ef;letter-spacing:-0.084px;font-weight:400;">EIDER</span></div><div class="a" style="left:900px;top:883px;width:120px;height:38px;overflow:hidden"><span class="t" style="left:13.828125px;top:13.00px;font-size:13px;line-height:13px;color:#e6e8ef;letter-spacing:0.925px;font-weight:400;">9,520,070</span></div><div class="a" style="left:1020px;top:883px;width:150px;height:38px;overflow:hidden"><span class="t" style="left:6px;top:13.00px;font-size:13px;line-height:13px;color:#e6e8ef;letter-spacing:0.188px;font-weight:400;">TÖNNING</span></div><div class="a" style="left:1170px;top:883px;width:150px;height:38px;overflow:hidden"><span class="t" style="left:6px;top:13.00px;font-size:13px;line-height:13px;color:#e6e8ef;letter-spacing:0.188px;font-weight:400;">TÖNNING</span></div><div class="a" style="left:1320px;top:883px;width:120px;height:38px;overflow:hidden"><span class="t" style="left:19.453125px;top:13.00px;font-size:13px;line-height:13px;color:#e6e8ef;letter-spacing:1.039px;font-weight:400;">99</span><span class="t" style="left:36px;top:13.00px;font-size:13px;line-height:13px;color:#e6e8ef;letter-spacing:0.781px;font-weight:400;">.8</span></div><div class="a" style="left:1440px;top:883px;width:150px;height:38px;overflow:hidden"><span class="t" style="left:6px;top:13.00px;font-size:13px;line-height:13px;color:#e6e8ef;letter-spacing:0.130px;font-weight:400;">STANDORT TÖNNING</span></div><div class="a" style="left:1590px;top:883px;width:120px;height:38px;overflow:hidden"><span class="t" style="left:6px;top:13.00px;font-size:13px;line-height:13px;color:#e6e8ef;letter-spacing:1.010px;font-weight:400;">8.950149034965467</span></div><div class="a" style="left:1710px;top:883px;width:120px;height:38px;overflow:hidden"><span class="t" style="left:6px;top:13.00px;font-size:13px;line-height:13px;color:#e6e8ef;letter-spacing:1.010px;font-weight:400;">54.31468299984522</span></div><div class="a" style="left:271px;top:922px;width:179px;height:38px;overflow:hidden"><span class="t" style="left:5px;top:13.00px;font-size:13px;line-height:13px;color:#e6e8ef;letter-spacing:0.893px;font-weight:400;">2000-01-01T00:00:00.000Z</span></div><div class="a" style="left:450px;top:922px;width:150px;height:38px;overflow:hidden"><span class="t" style="left:6px;top:13.00px;font-size:13px;line-height:13px;color:#e6e8ef;letter-spacing:0.905px;font-weight:400;">0309cd61-90c9-470e-84b5-6c7d8e9fa0b1</span></div><div class="a" style="left:600px;top:922px;width:150px;height:38px;overflow:hidden"><span class="t" style="left:6px;top:13.00px;font-size:13px;line-height:13px;color:#e6e8ef;letter-spacing:0.028px;font-weight:400;">RHEIN</span></div><div class="a" style="left:750px;top:922px;width:150px;height:38px;overflow:hidden"><span class="t" style="left:6px;top:13.00px;font-size:13px;line-height:13px;color:#e6e8ef;letter-spacing:0.028px;font-weight:400;">RHEIN</span></div><div class="a" style="left:900px;top:922px;width:120px;height:38px;overflow:hidden"><span class="t" style="left:5.5625px;top:13.00px;font-size:13px;line-height:13px;color:#e6e8ef;letter-spacing:0.936px;font-weight:400;">25,300,200</span></div><div class="a" style="left:1020px;top:922px;width:150px;height:38px;overflow:hidden"><span class="t" style="left:6px;top:13.00px;font-size:13px;line-height:13px;color:#e6e8ef;letter-spacing:0.109px;font-weight:400;">BINGEN</span></div><div class="a" style="left:1170px;top:922px;width:150px;height:38px;overflow:hidden"><span class="t" style="left:6px;top:13.00px;font-size:13px;line-height:13px;color:#e6e8ef;letter-spacing:0.109px;font-weight:400;">BINGEN</span></div><div class="a" style="left:1320px;top:922px;width:120px;height:38px;overflow:hidden"><span class="t" style="left:11.171875px;top:13.00px;font-size:13px;line-height:13px;color:#e6e8ef;letter-spacing:1.042px;font-weight:400;">528</span><span class="t" style="left:36px;top:13.00px;font-size:13px;line-height:13px;color:#e6e8ef;letter-spacing:0.870px;font-weight:400;">.36</span></div><div class="a" style="left:1440px;top:922px;width:150px;height:38px;overflow:hidden"><span class="t" style="left:6px;top:13.00px;font-size:13px;line-height:13px;color:#e6e8ef;letter-spacing:0.078px;font-weight:400;">STANDORT BINGEN</span></div><div class="a" style="left:1590px;top:922px;width:120px;height:38px;overflow:hidden"><span class="t" style="left:6px;top:13.00px;font-size:13px;line-height:13px;color:#e6e8ef;letter-spacing:1.010px;font-weight:400;">7.899667963397133</span></div><div class="a" style="left:1710px;top:922px;width:120px;height:38px;overflow:hidden"><span class="t" style="left:6px;top:13.00px;font-size:13px;line-height:13px;color:#e6e8ef;letter-spacing:1.067px;font-weight:400;">49.97034213591911</span></div><div class="a" style="left:271px;top:961px;width:179px;height:38px;overflow:hidden"><span class="t" style="left:5px;top:13.00px;font-size:13px;line-height:13px;color:#e6e8ef;letter-spacing:0.893px;font-weight:400;">2000-01-01T00:00:00.000Z</span></div><div class="a" style="left:450px;top:961px;width:150px;height:38px;overflow:hidden"><span class="t" style="left:6px;top:13.00px;font-size:13px;line-height:13px;color:#e6e8ef;letter-spacing:0.915px;font-weight:400;">04572010-1db2-4338-a3c6-7d8e9fa0b1c2</span></div><div class="a" style="left:600px;top:961px;width:150px;height:38px;overflow:hidden"><span class="t" style="left:6px;top:13.00px;font-size:13px;line-height:13px;color:#e6e8ef;letter-spacing:0.100px;font-weight:400;">DORTMUND-EMS-KANAL</span></div><div class="a" style="left:750px;top:961px;width:150px;height:38px;overflow:hidden"><span class="t" style="left:6px;top:13.00px;font-size:13px;line-height:13px;color:#e6e8ef;letter-spacing:0.005px;font-weight:400;">DEK</span></div><div class="a" style="left:900px;top:961px;width:120px;height:38px;overflow:hidden"><span class="t" style="left:13.828125px;top:13.00px;font-size:13px;line-height:13px;color:#e6e8ef;letter-spacing:0.925px;font-weight:400;">3,690,010</span></div><div class="a" style="left:1020px;top:961px;width:150px;height:38px;overflow:hidden"><span class="t" style="left:6px;top:13.00px;font-size:13px;line-height:13px;color:#e6e8ef;letter-spacing:-0.030px;font-weight:400;">HASEHUBBRÜCKE</span></div><div class="a" style="left:1170px;top:961px;width:150px;height:38px;overflow:hidden"><span class="t" style="left:6px;top:13.00px;font-size:13px;line-height:13px;color:#e6e8ef;letter-spacing:-0.030px;font-weight:400;">HASEHUBBRÜCKE</span></div><div class="a" style="left:1320px;top:961px;width:120px;height:38px;overflow:hidden"><span class="t" style="left:11.171875px;top:13.00px;font-size:13px;line-height:13px;color:#e6e8ef;letter-spacing:1.042px;font-weight:400;">166</span><span class="t" style="left:36px;top:13.00px;font-size:13px;line-height:13px;color:#e6e8ef;letter-spacing:0.870px;font-weight:400;">.42</span></div><div class="a" style="left:1440px;top:961px;width:150px;height:38px;overflow:hidden"><span class="t" style="left:6px;top:13.00px;font-size:13px;line-height:13px;color:#e6e8ef;letter-spacing:-0.087px;font-weight:400;">STANDORT MEPPEN</span></div><div class="a" style="left:1590px;top:961px;width:120px;height:38px;overflow:hidden"><span class="t" style="left:6px;top:13.00px;font-size:13px;line-height:13px;color:#e6e8ef;letter-spacing:1.010px;font-weight:400;">7.292912281272744</span></div><div class="a" style="left:1710px;top:961px;width:120px;height:38px;overflow:hidden"><span class="t" style="left:6px;top:13.00px;font-size:13px;line-height:13px;color:#e6e8ef;letter-spacing:1.010px;font-weight:400;">52.69419099784233</span></div><div class="a" style="left:271px;top:1000px;width:179px;height:38px;overflow:hidden"><span class="t" style="left:5px;top:13.00px;font-size:13px;line-height:13px;color:#e6e8ef;letter-spacing:0.893px;font-weight:400;">2000-01-01T00:00:00.000Z</span></div><div class="a" style="left:450px;top:1000px;width:150px;height:38px;overflow:hidden"><span class="t" style="left:6px;top:13.00px;font-size:13px;line-height:13px;color:#e6e8ef;letter-spacing:0.920px;font-weight:400;">04790e03-4353-4e80-92d7-8e9fa0b1c2d3</span></div><div class="a" style="left:600px;top:1000px;width:150px;height:38px;overflow:hidden"><span class="t" style="left:6px;top:13.00px;font-size:13px;line-height:13px;color:#e6e8ef;letter-spacing:-0.191px;font-weight:400;">OSTE</span></div><div class="a" style="left:750px;top:1000px;width:150px;height:38px;overflow:hidden"><span class="t" style="left:6px;top:13.00px;font-size:13px;line-height:13px;color:#e6e8ef;letter-spacing:-0.191px;font-weight:400;">OSTE</span></div><div class="a" style="left:900px;top:1000px;width:120px;height:38px;overflow:hidden"><span class="t" style="left:26.234375px;top:13.00px;font-size:13px;line-height:13px;color:#e6e8ef;letter-spacing:0.967px;font-weight:400;">126,003</span></div><div class="a" style="left:1020px;top:1000px;width:150px;height:38px;overflow:hidden"><span class="t" style="left:6px;top:13.00px;font-size:13px;line-height:13px;color:#e6e8ef;letter-spacing:-0.157px;font-weight:400;">NEUENSEER SCHLEUSE</span></div><div class="a" style="left:1170px;top:1000px;width:150px;height:38px;overflow:hidden"><span class="t" style="left:6px;top:13.00px;font-size:13px;line-height:13px;color:#e6e8ef;letter-spacing:-0.157px;font-weight:400;">NEUENSEER SCHLEUSE</span></div><div class="a" style="left:1320px;top:1000px;width:120px;height:38px;overflow:hidden"><span class="t" style="left:19.453125px;top:13.00px;font-size:13px;line-height:13px;color:#e6e8ef;letter-spacing:1.039px;font-weight:400;">58</span><span class="t" style="left:36px;top:13.00px;font-size:13px;line-height:13px;color:#e6e8ef;letter-spacing:0.781px;font-weight:400;">.9</span></div><div class="a" style="left:1440px;top:1000px;width:150px;height:38px;overflow:hidden"><span class="t" style="left:6px;top:13.00px;font-size:13px;line-height:13px;color:#e6e8ef;letter-spacing:0.095px;font-weight:400;">STANDORT HAMBURG</span></div><div class="a" style="left:1590px;top:1000px;width:120px;height:38px;overflow:hidden"><span class="t" style="left:6px;top:13.00px;font-size:13px;line-height:13px;color:#e6e8ef;letter-spacing:1.010px;font-weight:400;">9.130903597451067</span></div><div class="a" style="left:1710px;top:1000px;width:120px;height:38px;overflow:hidden"><span class="t" style="left:6px;top:13.00px;font-size:13px;line-height:13px;color:#e6e8ef;letter-spacing:1.010px;font-weight:400;">53.78068651386344</span></div><div class="a" style="left:271px;top:1039px;width:179px;height:38px;overflow:hidden"><span class="t" style="left:5px;top:13.00px;font-size:13px;line-height:13px;color:#e6e8ef;letter-spacing:0.893px;font-weight:400;">2000-01-01T00:00:00.000Z</span></div><div class="a" style="left:450px;top:1039px;width:150px;height:38px;overflow:hidden"><span class="t" style="left:6px;top:13.00px;font-size:13px;line-height:13px;color:#e6e8ef;letter-spacing:0.865px;font-weight:400;">04acd7e5-3cbc-4cdd-b1e8-9fa0b1c2d3e4</span></div><div class="a" style="left:600px;top:1039px;width:150px;height:38px;overflow:hidden"><span class="t" style="left:6px;top:13.00px;font-size:13px;line-height:13px;color:#e6e8ef;letter-spacing:-0.087px;font-weight:400;">NORDSEE</span></div><div class="a" style="left:750px;top:1039px;width:150px;height:38px;overflow:hidden"><span class="t" style="left:6px;top:13.00px;font-size:13px;line-height:13px;color:#e6e8ef;letter-spacing:-0.087px;font-weight:400;">NORDSEE</span></div><div class="a" style="left:900px;top:1039px;width:120px;height:38px;overflow:hidden"><span class="t" style="left:13.828125px;top:13.00px;font-size:13px;line-height:13px;color:#e6e8ef;letter-spacing:0.925px;font-weight:400;">9,530,010</span></div><div class="a" style="left:1020px;top:1039px;width:150px;height:38px;overflow:hidden"><span class="t" style="left:6px;top:13.00px;font-size:13px;line-height:13px;color:#e6e8ef;letter-spacing:-0.169px;font-weight:400;">EIDER-SPERRWERK AP</span></div><div class="a" style="left:1170px;top:1039px;width:150px;height:38px;overflow:hidden"><span class="t" style="left:6px;top:13.00px;font-size:13px;line-height:13px;color:#e6e8ef;letter-spacing:-0.169px;font-weight:400;">EIDER-SPERRWERK AP</span></div><div class="a" style="left:1320px;top:1039px;width:120px;height:38px;overflow:hidden"><span class="t" style="left:11.171875px;top:13.00px;font-size:13px;line-height:13px;color:#e6e8ef;letter-spacing:1.042px;font-weight:400;">109</span><span class="t" style="left:36px;top:13.00px;font-size:13px;line-height:13px;color:#e6e8ef;letter-spacing:0.910px;font-weight:400;">.617</span></div><div class="a" style="left:1440px;top:1039px;width:150px;height:38px;overflow:hidden"><span class="t" style="left:6px;top:13.00px;font-size:13px;line-height:13px;color:#e6e8ef;letter-spacing:0.130px;font-weight:400;">STANDORT TÖNNING</span></div><div class="a" style="left:1590px;top:1039px;width:120px;height:38px;overflow:hidden"><span class="t" style="left:6px;top:13.00px;font-size:13px;line-height:13px;color:#e6e8ef;letter-spacing:1.010px;font-weight:400;">8.842130064364467</span></div><div class="a" style="left:1710px;top:1039px;width:120px;height:38px;overflow:hidden"><span class="t" style="left:6px;top:13.00px;font-size:13px;line-height:13px;color:#e6e8ef;letter-spacing:1.010px;font-weight:400;">54.26592362421022</span></div></body></html>
